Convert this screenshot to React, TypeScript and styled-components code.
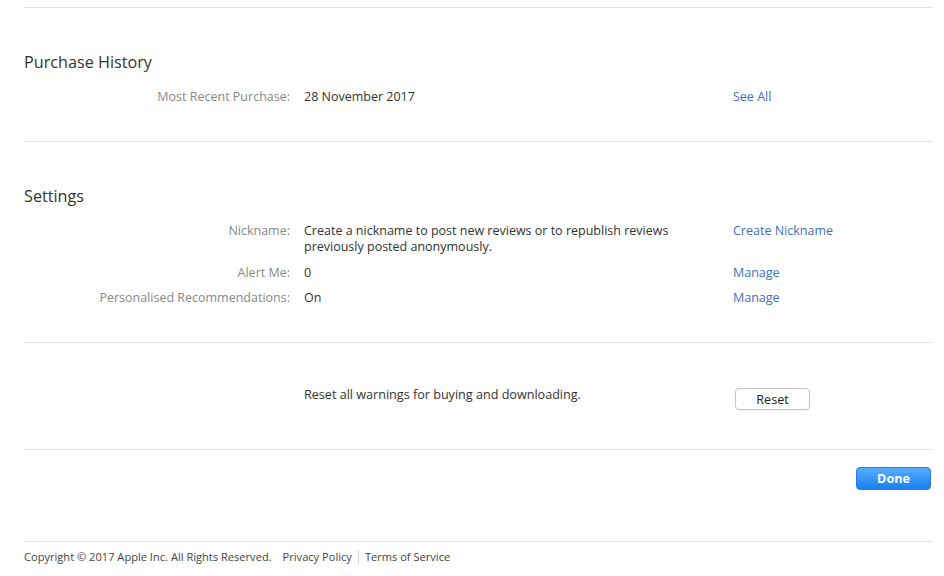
import React from "react";
import styled, { createGlobalStyle } from "styled-components";

const GlobalStyle = createGlobalStyle`
  html, body {
    margin: 0;
    padding: 0;
    background: #ffffff;
  }
  body {
    font-family: "Open Sans", "Noto Sans", "Liberation Sans", sans-serif;
    color: #333333;
    -webkit-font-smoothing: antialiased;
  }
`;

const Page = styled.div`
  width: 909px;
  margin: 0 0 0 24px;
  padding-top: 7px;
`;

const Section = styled.section`
  border-top: 1px solid #e5e5e5;
  padding: 44px 0 36px;
`;

const Heading = styled.h2`
  margin: 0 0 17px;
  font-size: 16.2px;
  line-height: 20px;
  font-weight: 400;
  color: #333333;
`;

const Rows = styled.dl`
  margin: 0;
  display: grid;
  grid-template-columns: 266px 415px auto;
  column-gap: 14px;
  row-gap: 9.5px;
  font-size: 12.5px;
  line-height: 16px;
`;

const Label = styled.dt`
  margin: 0;
  text-align: right;
  color: #888888;
`;

const Value = styled.dd`
  margin: 0;
  padding-right: 36px;
  color: #333333;
`;

const Action = styled.a`
  color: #3a72c5;
  text-decoration: none;
  cursor: pointer;
`;

const ResetSection = styled.section`
  border-top: 1px solid #e5e5e5;
  padding: 44px 0 39px;
  display: grid;
  grid-template-columns: 266px 415px auto;
  column-gap: 14px;
  align-items: start;
  font-size: 12.6px;
  line-height: 16px;
`;

const ResetText = styled.p`
  grid-column: 2;
  margin: 0;
`;

const ResetButton = styled.button`
  margin: 1px 0 0 2px;
  width: 75px;
  height: 22px;
  padding: 0;
  background: #ffffff;
  border: 1px solid #c4c4c4;
  border-radius: 4px;
  box-shadow: 0 1px 1px rgba(0, 0, 0, 0.06);
  font-family: inherit;
  font-size: 12.6px;
  color: #222222;
  cursor: pointer;
`;

const Actions = styled.div`
  border-top: 1px solid #e5e5e5;
  padding: 17px 2px 51px 0;
  display: flex;
  justify-content: flex-end;
`;

const DoneButton = styled.button`
  width: 75px;
  height: 23px;
  padding: 0;
  border: 1px solid #2b7ae4;
  border-radius: 4px;
  background: linear-gradient(#55aefd, #1c7ef2);
  color: #ffffff;
  font-family: inherit;
  font-size: 12.6px;
  font-weight: 700;
  cursor: pointer;
`;

const Footer = styled.footer`
  border-top: 1px solid #e5e5e5;
  padding-top: 8px;
  display: flex;
  align-items: center;
  font-size: 11.1px;
  line-height: 14px;
  color: #444444;
`;

const Copyright = styled.span`
  margin-right: 11px;
`;

const FooterLink = styled.a<{ $divided?: boolean }>`
  color: #444444;
  text-decoration: none;
  padding: 0 6px;
  border-left: ${(p) => (p.$divided ? "1px solid #d6d6d6" : "none")};
  &:first-of-type {
    padding-left: 0;
  }
`;

const App: React.FC = () => {
  return (
    <>
      <GlobalStyle />
      <Page>
        <Section>
          <Heading>Purchase History</Heading>
          <Rows>
            <Label>Most Recent Purchase:</Label>
            <Value>28 November 2017</Value>
            <Action>See All</Action>
          </Rows>
        </Section>
        <Section>
          <Heading>Settings</Heading>
          <Rows>
            <Label>Nickname:</Label>
            <Value>
              Create a nickname to post new reviews or to republish reviews
              previously posted anonymously.
            </Value>
            <Action>Create Nickname</Action>
            <Label>Alert Me:</Label>
            <Value>0</Value>
            <Action>Manage</Action>
            <Label>Personalised Recommendations:</Label>
            <Value>On</Value>
            <Action>Manage</Action>
          </Rows>
        </Section>
        <ResetSection>
          <ResetText>Reset all warnings for buying and downloading.</ResetText>
          <ResetButton>Reset</ResetButton>
        </ResetSection>
        <Actions>
          <DoneButton>Done</DoneButton>
        </Actions>
        <Footer>
          <Copyright>Copyright © 2017 Apple Inc. All Rights Reserved.</Copyright>
          <FooterLink>Privacy Policy</FooterLink>
          <FooterLink $divided>Terms of Service</FooterLink>
        </Footer>
      </Page>
    </>
  );
};

export default App;
